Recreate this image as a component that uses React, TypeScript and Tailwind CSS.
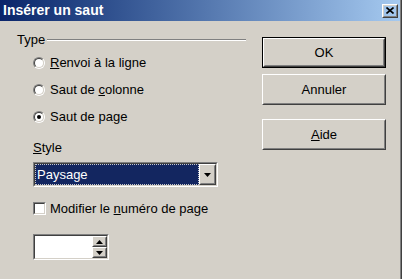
import React from "react";

const font = { fontFamily: '"Liberation Sans", Arial, sans-serif' };

function Raised({ className = "", children }: { className?: string; children?: React.ReactNode }) {
  return (
    <div className={`border border-t-white border-l-white border-r-[#404040] border-b-[#404040] ${className}`}>
      <div className="flex h-full w-full items-center justify-center border border-t-[#d4d0c8] border-l-[#d4d0c8] border-r-[#808080] border-b-[#808080]">
        {children}
      </div>
    </div>
  );
}

function Sunken({ className = "", children }: { className?: string; children?: React.ReactNode }) {
  return (
    <div className={`border border-t-[#808080] border-l-[#808080] border-r-white border-b-white ${className}`}>
      <div className="flex h-full w-full border border-t-[#404040] border-l-[#404040] border-r-[#d4d0c8] border-b-[#d4d0c8]">
        {children}
      </div>
    </div>
  );
}

function Radio({ checked, children }: { checked?: boolean; children: React.ReactNode }) {
  return (
    <div className="flex h-[27px] items-center">
      <div className="h-[12px] w-[12px] rounded-full border border-t-[#808080] border-l-[#808080] border-r-white border-b-white">
        <div className="flex h-full w-full items-center justify-center rounded-full border border-t-[#404040] border-l-[#404040] border-r-[#d4d0c8] border-b-[#d4d0c8] bg-white">
          {checked && <div className="h-[4px] w-[4px] rounded-full bg-black" />}
        </div>
      </div>
      <span className="ml-[5px]">{children}</span>
    </div>
  );
}

function Arrow({ up }: { up?: boolean }) {
  return (
    <svg width="7" height="4" viewBox="0 0 7 4">
      <path d={up ? "M3.5 0 L7 4 L0 4 Z" : "M0 0 L7 0 L3.5 4 Z"} fill="black" />
    </svg>
  );
}

export default function App() {
  return (
    <div className="w-[402px] h-[279px] border-r border-[#404040] bg-[#d4d0c8] text-[13px] leading-[15px] text-black" style={font}>
      <div className="h-full border-r border-[#808080]">
        {/* title bar */}
        <div className="flex h-[21px] items-center justify-between bg-linear-to-r from-[#0a246a] to-[#a6caf0] pl-[3px] pr-[2px]">
          <span className="text-[14px] font-bold text-white">Insérer un saut</span>
          <Raised className="h-[14px] w-[16px]">
            <svg width="8" height="7" viewBox="0 0 8 7">
              <path d="M0.5 0.5 L7.5 6.5 M7.5 0.5 L0.5 6.5" stroke="black" strokeWidth="1.6" />
            </svg>
          </Raised>
        </div>

        <div className="flex">
          {/* left column */}
          <div className="w-[262px] pl-[17px] pr-[16px] pt-[11px]">
            <div className="flex h-[15px] items-center">
              <span>Type</span>
              <div className="ml-[2px] h-[2px] flex-1 border-t border-b border-t-[#808080] border-b-white" />
            </div>
            <div className="mt-[2px] pl-[16px]">
              <Radio>
                <u>R</u>envoi à la ligne
              </Radio>
              <Radio>
                Saut de <u>c</u>olonne
              </Radio>
              <Radio checked>
                Saut de pa<u>g</u>e
              </Radio>
            </div>

            <div className="mt-[10px] pl-[16px]">
              <div>
                <u>S</u>tyle
              </div>
              <Sunken className="mt-[7px] h-[25px] w-[185px]">
                <div className="flex flex-1 items-center border border-dotted border-[#c8c8c8] bg-[#132660] pl-[1px] text-white">
                  Paysage
                </div>
                <Raised className="h-full w-[17px]">
                  <Arrow />
                </Raised>
              </Sunken>

              <div className="mt-[15px] flex h-[13px] items-center">
                <Sunken className="h-[13px] w-[13px]">
                  <div className="flex-1 bg-white" />
                </Sunken>
                <span className="ml-[4px]">
                  Modifier le <u>n</u>uméro de page
                </span>
              </div>

              <Sunken className="mt-[19px] h-[26px] w-[76px]">
                <div className="flex-1 bg-white" />
                <div className="flex w-[15px] flex-col">
                  <Raised className="flex-1">
                    <Arrow up />
                  </Raised>
                  <Raised className="flex-1">
                    <Arrow />
                  </Raised>
                </div>
              </Sunken>
            </div>
          </div>

          {/* right column */}
          <div className="flex w-[124px] flex-col pt-[16px]">
            <div className="h-[31px] border border-black">
              <Raised className="h-full w-full">OK</Raised>
            </div>
            <Raised className="mt-[6px] h-[31px]">Annuler</Raised>
            <Raised className="mt-[14px] h-[31px]">
              <span>
                <u>A</u>ide
              </span>
            </Raised>
          </div>
        </div>
      </div>
    </div>
  );
}
